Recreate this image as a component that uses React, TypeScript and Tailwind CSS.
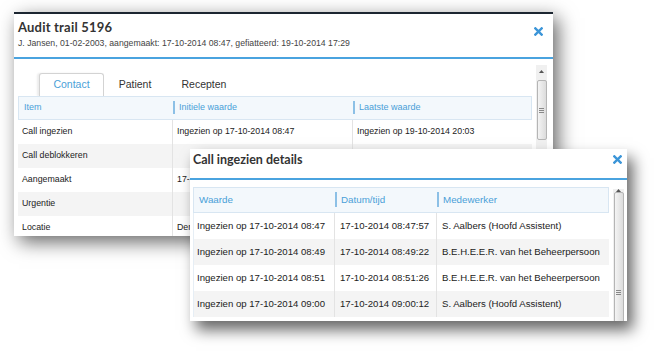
import React from "react";

const CloseIcon = () => (
  <svg width="9" height="9" viewBox="0 0 10 10" className="block">
    <path d="M1.5 1.5 L8.5 8.5 M8.5 1.5 L1.5 8.5" stroke="#3b95d8" strokeWidth="2.6" strokeLinecap="square" />
  </svg>
);

const Scrollbar = ({ thumbTop, thumbHeight }: { thumbTop: number; thumbHeight: number }) => (
  <div className="w-[11px] h-full bg-[#f0f0f0] flex flex-col items-center overflow-hidden">
    <div className="h-[12px] w-full flex items-center justify-center">
      <svg width="5" height="3" viewBox="0 0 5 3">
        <path d="M0 3 L2.5 0 L5 3 Z" fill="#555" />
      </svg>
    </div>
    <div
      className="w-[10px] shrink-0 rounded-[2px] border border-[#b5b5b5] bg-gradient-to-r from-[#f4f4f4] to-[#dcdcdc] flex items-center justify-center"
      style={{ marginTop: thumbTop, height: thumbHeight }}
    >
      <div className="flex flex-col gap-[1px]">
        <div className="w-[5px] h-px bg-[#888]" />
        <div className="w-[5px] h-px bg-[#888]" />
        <div className="w-[5px] h-px bg-[#888]" />
      </div>
    </div>
  </div>
);

const auditRows = [
  ["Call ingezien", "Ingezien op 17-10-2014 08:47", "Ingezien op 19-10-2014 20:03"],
  ["Call deblokkeren", "", ""],
  ["Aangemaakt", "17-10-2014 08:47", ""],
  ["Urgentie", "", ""],
  ["Locatie", "Dermatologie", ""],
];

const detailRows = [
  ["Ingezien op 17-10-2014 08:47", "17-10-2014 08:47:57", "S. Aalbers (Hoofd Assistent)"],
  ["Ingezien op 17-10-2014 08:49", "17-10-2014 08:49:22", "B.E.H.E.E.R. van het Beheerpersoon"],
  ["Ingezien op 17-10-2014 08:51", "17-10-2014 08:51:26", "B.E.H.E.E.R. van het Beheerpersoon"],
  ["Ingezien op 17-10-2014 09:00", "17-10-2014 09:00:12", "S. Aalbers (Hoofd Assistent)"],
];

const HeadCell = ({ label, first, w }: { label: string; first?: boolean; w: string }) => (
  <div className={`${w} h-full flex items-center relative whitespace-nowrap`}>
    {!first && <div className="absolute left-0 top-[4px] bottom-[5px] w-[2px] bg-[#8cc0e6]" />}
    <span className={first ? "pl-[5px]" : "pl-[6px]"}>{label}</span>
  </div>
);

export default function App() {
  return (
    <div className="relative w-[665px] h-[354px] bg-white overflow-hidden font-['Liberation_Sans',Arial,sans-serif] text-[#222]">
      {/* Audit trail window */}
      <div className="absolute left-[14px] top-[12px] w-[539px] h-[224px] bg-white border-t-2 border-[#1c2631] shadow-[5px_6px_18px_rgba(0,0,0,0.6)] flex flex-col overflow-hidden">
        <div className="px-[4px] pt-[5px] pb-[6px] border-b-2 border-[#4aa3df] flex justify-between">
          <div>
            <div className="font-['Lato',sans-serif] font-bold text-[13px] leading-[16px] text-[#333] tracking-[0.2px]">
              Audit trail 5196
            </div>
            <div className="text-[8.7px] leading-[15px] text-[#444] mt-[1px] whitespace-nowrap">
              J. Jansen, 01-02-2003, aangemaakt: 17-10-2014 08:47, gefiatteerd: 19-10-2014 17:29
            </div>
          </div>
          <div className="pt-[8px] pr-[6px]">
            <CloseIcon />
          </div>
        </div>
        <div className="flex flex-1 min-h-0 pl-[4px] pr-[7px]">
          <div className="flex-1 flex flex-col pt-[14px]">
            <div className="flex items-end h-[23px] pl-[21px] text-[10.5px]">
              <div className="w-[65px] h-[23px] border border-b-0 border-[#d3d3d3] rounded-t-[3px] bg-white flex items-center justify-center text-[#4a9fd8] shadow-[-2px_0_2px_rgba(0,0,0,0.08)]">
                Contact
              </div>
              <div className="w-[62px] h-[23px] flex items-center justify-center text-[#333]">Patient</div>
              <div className="w-[76px] h-[23px] flex items-center justify-center text-[#333]">Recepten</div>
            </div>
            <div className="w-[514px]">
              <div className="h-[24px] flex items-center bg-[#f3f8fc] border border-[#d8e6f2] text-[9px] text-[#4a9fd8]">
                <HeadCell label="Item" first w="w-[154px]" />
                <HeadCell label="Initiele waarde" w="w-[180px]" />
                <HeadCell label="Laatste waarde" w="flex-1" />
              </div>
              {auditRows.map((r, i) => (
                <div
                  key={r[0]}
                  className={`h-[24px] flex text-[8.8px] text-[#222] whitespace-nowrap ${i % 2 === 1 ? "bg-[#f4f4f4]" : "bg-white"}`}
                >
                  <div className="w-[154px] pl-[4px] flex items-center">{r[0]}</div>
                  <div className="w-[180px] pl-[4px] flex items-center border-l border-[#e3e3e3]">{r[1]}</div>
                  <div className="flex-1 pl-[4px] flex items-center border-l border-[#e3e3e3]">{r[2]}</div>
                </div>
              ))}
            </div>
          </div>
          <div className="pt-[6px] pl-[4px] h-full">
            <Scrollbar thumbTop={3} thumbHeight={60} />
          </div>
        </div>
      </div>

      {/* Call ingezien details window */}
      <div className="absolute left-[190px] top-[149px] w-[437px] h-[172px] bg-white shadow-[6px_9px_14px_rgba(0,0,0,0.6)] flex flex-col overflow-hidden">
        <div className="pl-[3px] pr-[5px] pt-[1px] h-[31px] border-b-2 border-[#4aa3df] flex justify-between">
          <div className="font-['Lato',sans-serif] font-bold text-[12.5px] leading-[20px] text-[#333]">
            Call ingezien details
          </div>
          <div className="pt-[5px]">
            <CloseIcon />
          </div>
        </div>
        <div className="flex flex-1 min-h-0 pl-[3px] pr-[3px]">
          <div className="w-[417px] pt-[7px]">
            <div className="h-[26px] flex items-center bg-[#f3f8fc] border border-[#d8e6f2] text-[9.8px] text-[#4a9fd8]">
              <HeadCell label="Waarde" first w="w-[141px]" />
              <HeadCell label="Datum/tijd" w="w-[102px]" />
              <HeadCell label="Medewerker" w="flex-1" />
            </div>
            {detailRows.map((r, i) => (
              <div
                key={i}
                className={`h-[26px] flex text-[9.6px] text-[#222] whitespace-nowrap border-l border-[#e6eef5] ${i % 2 === 1 ? "bg-[#f4f4f4]" : "bg-white"}`}
              >
                <div className="w-[140px] pl-[3px] flex items-center">{r[0]}</div>
                <div className="w-[102px] pl-[5px] flex items-center border-l border-[#e3e3e3]">{r[1]}</div>
                <div className="flex-1 pl-[5px] flex items-center border-l border-[#e3e3e3]">{r[2]}</div>
              </div>
            ))}
          </div>
          <div className="pt-[9px] pl-[4px] h-full">
            <Scrollbar thumbTop={0} thumbHeight={200} />
          </div>
        </div>
      </div>
    </div>
  );
}
